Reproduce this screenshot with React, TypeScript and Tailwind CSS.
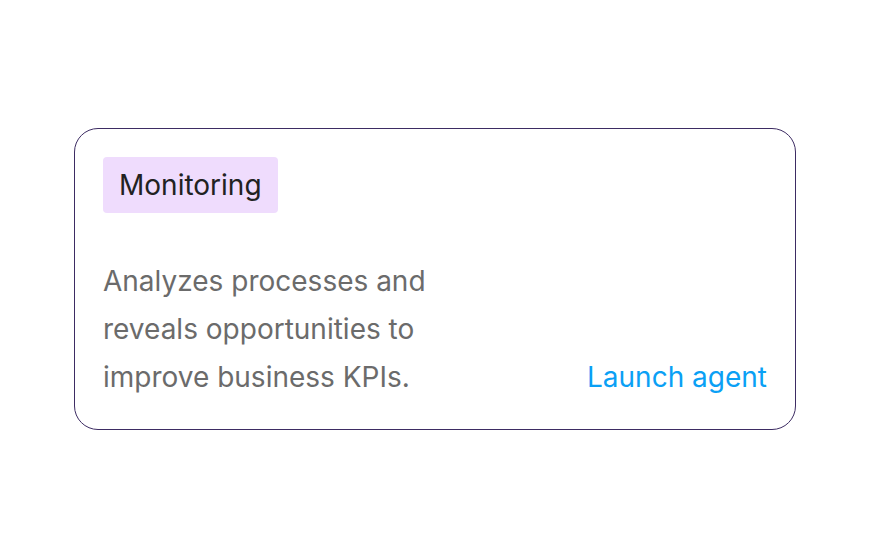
export default function App() {
  return (
    <div className="flex h-[560px] w-[872px] items-start justify-start bg-white font-['Inter',sans-serif]">
      <div className="ml-[74px] mt-[128px] flex h-[302px] w-[722px] flex-col rounded-[24px] border border-[#3d2c63] px-[28px] pb-[28px] pt-[28px]">
        <div className="flex">
          <span className="flex h-[56px] items-center rounded-[4px] bg-[#efdcfd] px-[16px] text-[28px] leading-none text-[#222222]">
            Monitoring
          </span>
        </div>
        <div className="mt-auto flex items-end justify-between">
          <p className="w-[380px] text-[28px] leading-[48px] text-[#6b6b6b]">
            Analyzes processes and reveals opportunities to improve business KPIs.
          </p>
          <a href="#" className="text-[28px] leading-[48px] text-[#0aa0f5]">
            Launch agent
          </a>
        </div>
      </div>
    </div>
  );
}
